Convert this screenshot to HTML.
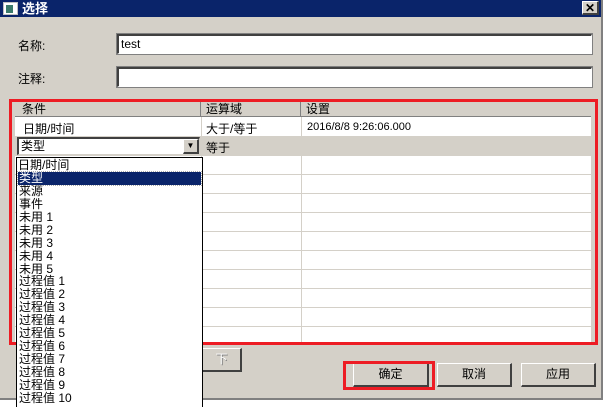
<!DOCTYPE html>
<html style="width:609px;height:407px;overflow:hidden"><head><meta charset="utf-8"><style>
*{margin:0;padding:0;box-sizing:border-box}
body{width:609px;height:407px;background:#fff;position:relative;overflow:hidden;font-family:"Liberation Sans","Noto Sans CJK SC","WenQuanYi Zen Hei",sans-serif;font-size:12px;color:#000}
.a{position:absolute}
.win{left:0;top:0;width:603px;height:400px;background:#d4d0c8;border-right:2px solid #808080;border-bottom:2px solid #808080}
.title{left:0;top:0;width:601px;height:17px;background:#0a246a;color:#fff;font-weight:bold;font-size:13px;line-height:17px;padding-left:22px}
.inp{background:#fff;border-top:2px solid #404040;border-left:2px solid #404040;border-right:1px solid #fff;border-bottom:1px solid #fff;outline:1px solid #808080;}
.btn{background:#d4d0c8;border-top:1px solid #fff;border-left:1px solid #fff;border-right:2px solid #404040;border-bottom:2px solid #404040;text-align:center;line-height:20px;font-size:12px}
.red{border:3px solid #ed1c24}
.dd div{height:12.95px;line-height:12px}
</style></head><body>
<div class="a win"></div>
<div class="a title">选择</div>
<div class="a" style="left:3px;top:2px;width:15px;height:13px;background:#fff;border:1px solid #c0c0c0"><div style="position:absolute;left:2px;top:2px;width:7px;height:8px;background:#3a7a6a"></div></div>
<div class="a btn" style="left:582px;top:1px;width:17px;height:14px;line-height:12px;font-size:12px;font-weight:bold">✕</div>
<div class="a" style="left:18px;top:37px">名称:</div>
<div class="a inp" style="left:117px;top:34px;width:475px;height:20px;padding-left:2px;line-height:16px">test</div>
<div class="a" style="left:18px;top:70px">注释:</div>
<div class="a inp" style="left:117px;top:67px;width:475px;height:20px"></div>

<div class="a" style="left:15px;top:101px;width:576px;height:242px;background:#fff"></div>
<div class="a" style="left:15px;top:101px;width:576px;height:16px;background:#d4d0c8;border-bottom:1px solid #808080"></div>
<div class="a" style="left:200px;top:101px;width:1px;height:16px;background:#808080"></div>
<div class="a" style="left:300px;top:101px;width:1px;height:16px;background:#808080"></div>
<div class="a" style="left:22px;top:102px;line-height:15px">条件</div>
<div class="a" style="left:206px;top:102px;line-height:15px">运算域</div>
<div class="a" style="left:306px;top:102px;line-height:15px">设置</div>
<div class="a" style="left:23px;top:120px">日期/时间</div>
<div class="a" style="left:206px;top:120px">大于/等于</div>
<div class="a" style="left:307px;top:121px;font-size:11px">2016/8/8 9:26:06.000</div>
<div class="a" style="left:15px;top:136px;width:576px;height:20px;background:#d4d0c8"></div>
<div class="a" style="left:206px;top:139px">等于</div>
<div class="a inp" style="left:17px;top:137px;width:183px;height:18px;outline:none;border-right:1px solid #d4d0c8;border-bottom:1px solid #d4d0c8;padding-left:2px;line-height:14px">类型</div>
<div class="a btn" style="left:183px;top:139px;width:16px;height:15px;line-height:12px;font-size:8px">▼</div>
<div class="a" style="left:201px;top:117px;width:1px;height:226px;background:#d4d0c8"></div>
<div class="a" style="left:301px;top:117px;width:1px;height:226px;background:#d4d0c8"></div>
<div class="a" style="left:15px;top:174px;width:576px;height:1px;background:#d4d0c8"></div>
<div class="a" style="left:15px;top:193px;width:576px;height:1px;background:#d4d0c8"></div>
<div class="a" style="left:15px;top:212px;width:576px;height:1px;background:#d4d0c8"></div>
<div class="a" style="left:15px;top:231px;width:576px;height:1px;background:#d4d0c8"></div>
<div class="a" style="left:15px;top:250px;width:576px;height:1px;background:#d4d0c8"></div>
<div class="a" style="left:15px;top:269px;width:576px;height:1px;background:#d4d0c8"></div>
<div class="a" style="left:15px;top:288px;width:576px;height:1px;background:#d4d0c8"></div>
<div class="a" style="left:15px;top:307px;width:576px;height:1px;background:#d4d0c8"></div>
<div class="a" style="left:15px;top:326px;width:576px;height:1px;background:#d4d0c8"></div>

<div class="a btn" style="left:202px;top:348px;width:40px;height:24px;color:#fff;text-shadow:1px 1px #808080">下</div>
<div class="a red" style="left:9px;top:99px;width:589px;height:246px"></div>

<div class="a dd" style="left:16px;top:157px;width:187px;height:250px;overflow:hidden;background:#fff;border:1px solid #000;border-bottom:none;font-size:12px;padding-left:2px;padding-top:1px">
<div style="margin-left:-1px">日期/时间</div>
<div style="background:#0a246a;color:#fff;margin-left:-1px;margin-right:1px;outline:1px dotted #aaa;padding-left:1px">类型</div>
<div>来源</div><div>事件</div>
<div>未用 1</div><div>未用 2</div><div>未用 3</div><div>未用 4</div><div>未用 5</div>
<div>过程值 1</div><div>过程值 2</div><div>过程值 3</div><div>过程值 4</div><div>过程值 5</div>
<div>过程值 6</div><div>过程值 7</div><div>过程值 8</div><div>过程值 9</div><div>过程值 10</div>
</div>

<div class="a btn" style="left:353px;top:363px;width:76px;height:24px">确定</div>
<div class="a red" style="left:343px;top:361px;width:92px;height:29px"></div>
<div class="a btn" style="left:437px;top:363px;width:75px;height:24px">取消</div>
<div class="a btn" style="left:521px;top:363px;width:75px;height:24px">应用</div>
</body></html>
